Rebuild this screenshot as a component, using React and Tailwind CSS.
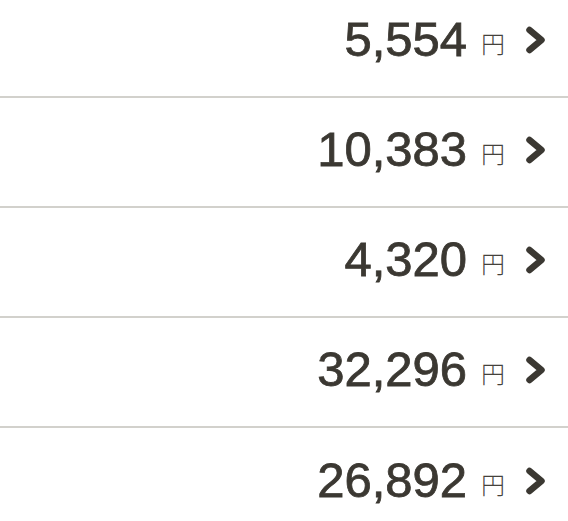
const rows = ['5,554', '10,383', '4,320', '32,296', '26,892'];

function Chevron() {
  return (
    <svg width="22" height="28" viewBox="0 0 22 28" className="text-[#3b3832]">
      <path d="M4.5 4 L16.5 14 L4.5 24" fill="none" stroke="currentColor" strokeWidth="6.5" strokeLinecap="round" strokeLinejoin="round" />
    </svg>
  );
}

export default function App() {
  return (
    <div className="w-[568px] h-[521px] overflow-hidden bg-white">
      <div className="-mt-[12px]">
        {rows.map((amount, i) => (
          <div
            key={amount}
            className={`h-[110px] flex items-center justify-end pr-[21px] ${i < rows.length - 1 ? 'border-b-2 border-[#d2d1cc]' : ''}`}
          >
            <div className="flex items-center -mt-[5px]">
              <span
                className="text-[49px] leading-none text-[#3b3832] [-webkit-text-stroke:0.8px_#3b3832]"
                style={{ fontFamily: '"Liberation Sans", Arial, sans-serif' }}
              >
                {amount}
              </span>
              <span
                className="ml-[14px] mt-[6px] text-[24px] leading-none font-light text-[#45423c]"
                style={{ fontFamily: '"Noto Sans CJK JP", sans-serif' }}
              >
                円
              </span>
              <span className="ml-[20px] mt-[1px] flex">
                <Chevron />
              </span>
            </div>
          </div>
        ))}
      </div>
    </div>
  );
}
